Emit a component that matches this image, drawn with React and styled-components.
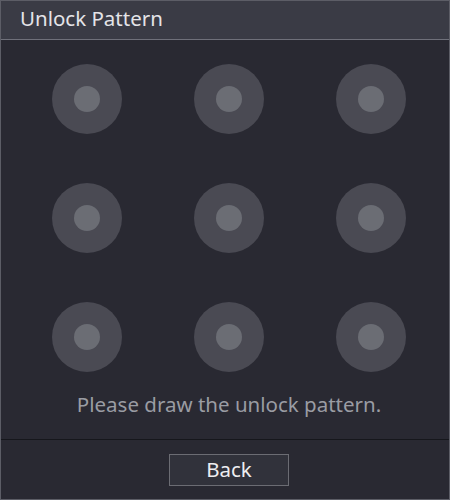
import styled, { createGlobalStyle } from "styled-components";

const GlobalStyle = createGlobalStyle`
    html, body{margin: 0; padding: 0; background: #292932;}
    *{box-sizing: border-box;}
`;
const Window = styled.div`
    width: 450px;
    height: 500px;
    border: 1px solid #5c5d66;
    background-color: #292932;
    display: flex;
    flex-direction: column;
    font-family: "Noto Sans", "Open Sans", sans-serif;
`;
const Header = styled.header`
    height: 39px;
    flex: 0 0 39px;
    background-color: #3a3b45;
    border-bottom: 1px solid #6f707a;
    padding-left: 19px;
    & h1{
        margin: 0;
        font-size: 20.5px;
        font-weight: 400;
        line-height: 34px;
        color: #e4e4e8;
    }
`;
const Body = styled.section`
    flex: 1;
    padding: 24px 0 0 8px;
    display: flex;
    flex-direction: column;
    align-items: center;
`;
const Grid = styled.div`
    display: grid;
    grid-template-columns: repeat(3, 70px);
    grid-auto-rows: 70px;
    column-gap: 72px;
    row-gap: 49px;
`;
const Dot = styled.div`
    width: 70px;
    height: 70px;
    border-radius: 50%;
    background-color: #4a4a53;
    display: flex;
    align-items: center;
    justify-content: center;
    cursor: pointer;
    &::after{
        content: "";
        width: 26px;
        height: 26px;
        border-radius: 50%;
        background-color: #6b6d74;
    }
`;
const Message = styled.p`
    margin: 18px 0 0;
    font-size: 20.5px;
    line-height: 28px;
    color: #9a9ca3;
`;
const Footer = styled.footer`
    flex: 0 0 60px;
    border-top: 1px solid #16171c;
    padding: 14px 0 0 8px;
    display: flex;
    justify-content: center;
`;
const Button = styled.button`
    width: 120px;
    height: 32px;
    background-color: #31323b;
    border: 1px solid #6b6c73;
    border-radius: 0;
    color: #eeeef0;
    font-family: inherit;
    font-size: 20.5px;
    line-height: 28px;
    padding: 0 0 2px;
    cursor: pointer;
`;

const dots = Array.from({length: 9}, (_, i) => i);

const App = () => {
    return <>
        <GlobalStyle/>
        <Window>
            <Header><h1>Unlock Pattern</h1></Header>
            <Body>
                <Grid>
                    {dots.map(i => <Dot key={i}/>)}
                </Grid>
                <Message>Please draw the unlock pattern.</Message>
            </Body>
            <Footer>
                <Button>Back</Button>
            </Footer>
        </Window>
    </>
}
export default App
